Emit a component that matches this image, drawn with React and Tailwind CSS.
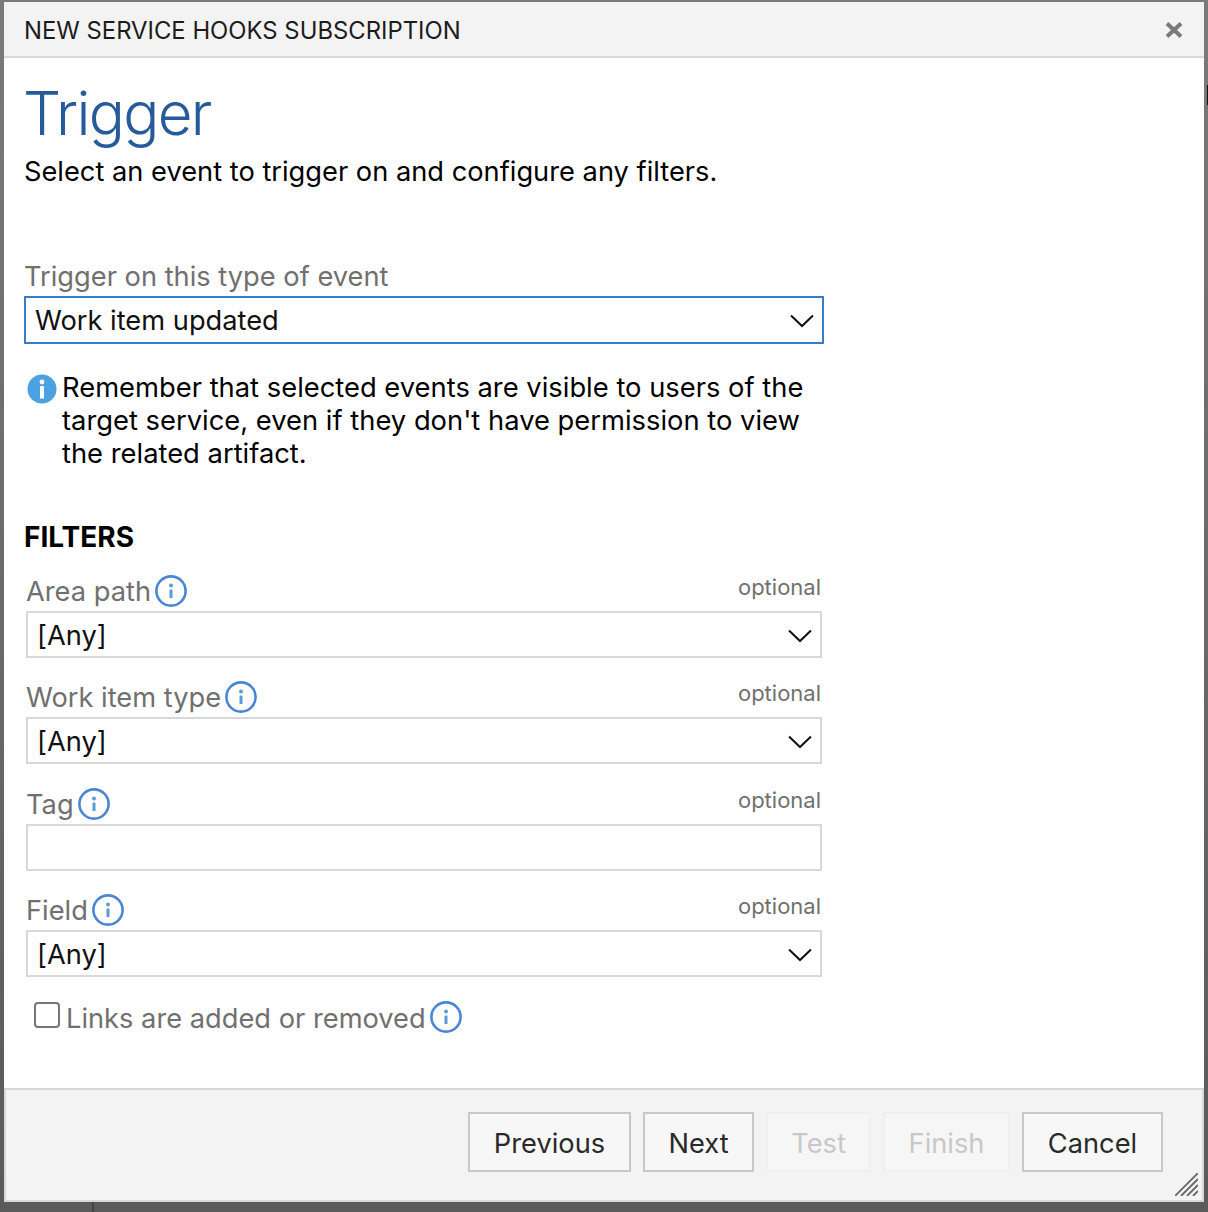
const Chevron = () => (
  <svg width="24" height="14" viewBox="0 0 24 14" fill="none" stroke="#111" strokeWidth="2" className="shrink-0">
    <path d="M1 1.5 L12 12 L23 1.5" />
  </svg>
);

const InfoOutline = ({ className = "" }) => (
  <svg width="32" height="32" viewBox="0 0 32 32" className={`shrink-0 ${className}`} fill="none">
    <circle cx="16" cy="16" r="14.6" stroke="#4a86d4" strokeWidth="2.6" />
    <circle cx="16" cy="10.6" r="2" fill="#5b9bd8" />
    <rect x="14.5" y="14.5" width="3" height="8.5" rx="0.6" fill="#5b9bd8" />
  </svg>
);

const InfoFilled = () => (
  <svg width="30" height="30" viewBox="0 0 30 30" className="shrink-0">
    <circle cx="15" cy="15" r="14.5" fill="#4ea1e0" />
    <circle cx="15" cy="8" r="2.4" fill="#fff" />
    <rect x="13" y="12" width="4" height="12.5" rx="0.5" fill="#fff" />
  </svg>
);

const Field = ({ label, select, mt }) => (
  <div className={`flex flex-col ${mt}`}>
    <div className="flex h-[38px] items-center justify-between pb-[2px]">
      <div className="flex items-center gap-[4px]">
        <span className="text-[27.25px] leading-[37px] text-[#707070]">{label}</span>
        <InfoOutline />
      </div>
      <span className="-mt-[7px] mr-[1px] text-[22px] text-[#707070]">optional</span>
    </div>
    <div className="flex h-[47px] w-[796px] items-center justify-between border-2 border-[#d8d8d8] bg-white pl-[9px] pr-[8px] pt-[3px] text-[27.25px] text-[#111]">
      <span>{select}</span>
      {select && <Chevron />}
    </div>
  </div>
);

const Btn = ({ children, w, disabled }) => (
  <div
    className={`flex h-[60px] items-center justify-center border-2 pt-[4px] text-[27.25px] ${w} ${
      disabled ? "border-[#efefef] bg-[#f6f6f6] text-[#c8c8c8]" : "border-[#c8c8c8] bg-[#f7f7f7] text-[#2a2a2a]"
    }`}
  >
    {children}
  </div>
);

export default function App() {
  return (
    <div className="relative h-[1212px] w-[1208px] overflow-hidden bg-gradient-to-b from-[#7a7a7a] to-[#5a5a5a] pb-[10px] pl-[4px] pr-[4px] pt-[2px] font-['Inter',sans-serif]">
      <span className="absolute -top-[42px] left-[134px] text-[42px] leading-[50px] text-[#111]">Service Hooks</span>
      <div className="absolute bottom-0 left-[92px] h-[10px] w-[2px] bg-[#444]" />
      <div className="absolute right-0 top-[85px] h-[20px] w-[1px] bg-[#111]" />
      <div className="relative flex h-[1200px] w-[1200px] flex-col bg-white">
        <div className="flex h-[56px] shrink-0 items-center justify-between border-b-2 border-[#d8d8d8] bg-[#f3f3f3] pl-[20px] pr-[21px] pt-[4px]">
          <span className="text-[23.85px] text-[#1c1c1c]">NEW SERVICE HOOKS SUBSCRIPTION</span>
          <svg width="18" height="16" viewBox="0 0 18 16" stroke="#7a7a7a" strokeWidth="4" className="-mt-[2px]">
            <path d="M2 1.5 L16 14.5 M16 1.5 L2 14.5" />
          </svg>
        </div>

        <div className="flex flex-1 flex-col pl-[20px]">
          <h1 className="-ml-[1px] mt-[16px] text-[60px] font-[350] leading-[78px] tracking-[-1.7px] text-[#255a9b]">Trigger</h1>
          <p className="mt-[1px] text-[27.25px] leading-[38px] text-black">
            Select an event to trigger on and configure any filters.
          </p>

          <div className="mt-[67px] text-[27.25px] leading-[38px] text-[#707070]">Trigger on this type of event</div>
          <div className="flex h-[48px] w-[800px] items-center justify-between border-2 border-[#3a7bd0] pl-[9px] pr-[8px] pt-[2px] text-[27.25px] text-[#111]">
            <span>Work item updated</span>
            <Chevron />
          </div>

          <div className="mt-[27px] flex w-[790px] items-start gap-[5px] pl-[3px]">
            <div className="mt-[3px]"><InfoFilled /></div>
            <p className="text-[27.35px] leading-[33px] text-black">
              Remember that selected events are visible to users of the target service, even if they don't have permission to view the related artifact.
            </p>
          </div>

          <div className="mt-[48px] text-[28px] font-bold leading-[38px] text-black">FILTERS</div>

          <div className="box-content flex w-[796px] flex-col pl-[2px]">
            <Field label="Area path" select="[Any]" mt="mt-[17px]" />
            <Field label="Work item type" select="[Any]" mt="mt-[21px]" />
            <Field label="Tag" mt="mt-[22px]" />
            <Field label="Field" select="[Any]" mt="mt-[21px]" />
          </div>

          <div className="mt-[23px] flex items-center gap-[6px] pl-[10px]">
            <div className="-mt-[8px] h-[26px] w-[26px] rounded-[4px] border-2 border-[#777] bg-white" />
            <span className="text-[27.25px] leading-[37px] text-[#707070]">Links are added or removed</span>
            <InfoOutline className="-ml-[2px] -mt-[4px]" />
          </div>
        </div>

        <div className="relative flex h-[114px] shrink-0 items-center justify-end gap-[12px] border-2 border-[#d8d8d8] bg-[#f3f3f3] pb-[6px] pr-[39px]">
          <Btn w="w-[163px]">Previous</Btn>
          <Btn w="w-[111px]">Next</Btn>
          <Btn w="w-[105px]" disabled>Test</Btn>
          <Btn w="w-[127px]" disabled>Finish</Btn>
          <Btn w="w-[141px]">Cancel</Btn>
          <svg className="absolute bottom-[4px] right-[4px]" width="23" height="23" viewBox="0 0 23 23" stroke="#666" strokeWidth="1.8">
            <path d="M0 23 L23 0 M6 23 L23 6 M12 23 L23 12 M18 23 L23 18" />
          </svg>
        </div>
      </div>
    </div>
  );
}
